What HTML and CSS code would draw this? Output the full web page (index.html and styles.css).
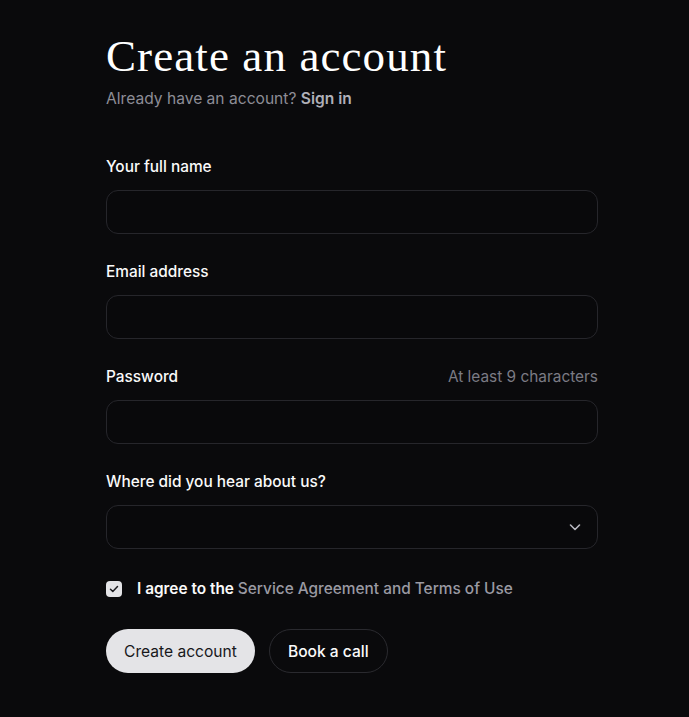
FILE: index.html
```html
<!DOCTYPE html>
<html lang="en">
<head>
    <meta charset="UTF-8">
    <meta name="viewport" content="width=device-width, initial-scale=1.0">
    <title>Create an account</title>
    <link rel="stylesheet" href="styles.css">
</head>
<body>
    <main class="signup">
        <h1 class="signup-title">Create an account</h1>
        <p class="signup-sub">Already have an account? <a href="#" class="signup-link">Sign in</a></p>

        <form class="signup-form">
            <div class="field">
                <label class="field-label" for="nameInput">Your full name</label>
                <input class="field-input" type="text" id="nameInput">
            </div>
            <div class="field">
                <label class="field-label" for="emailInput">Email address</label>
                <input class="field-input" type="email" id="emailInput">
            </div>
            <div class="field">
                <div class="field-head">
                    <label class="field-label" for="passwordInput">Password</label>
                    <span class="field-hint">At least 9 characters</span>
                </div>
                <input class="field-input" type="password" id="passwordInput">
            </div>
            <div class="field">
                <label class="field-label" for="sourceInput">Where did you hear about us?</label>
                <div class="select-wrap">
                    <select class="field-input field-select" id="sourceInput">
                        <option value=""></option>
                        <option value="search">Search engine</option>
                        <option value="friend">Friend or colleague</option>
                        <option value="social">Social media</option>
                        <option value="other">Other</option>
                    </select>
                    <svg class="select-chevron" width="14" height="14" viewBox="0 0 14 14" fill="none">
                        <path d="M2.5 5l4.5 4.5 4.5-4.5" stroke="#b8b8c0" stroke-width="1.6" stroke-linecap="round" stroke-linejoin="round"/>
                    </svg>
                </div>
            </div>

            <label class="agree">
                <span class="agree-box">
                    <svg width="12" height="12" viewBox="0 0 12 12" fill="none">
                        <path d="M2.5 6.2l2.3 2.3 4.7-5" stroke="#1c1c20" stroke-width="1.5" stroke-linecap="round" stroke-linejoin="round"/>
                    </svg>
                </span>
                <span class="agree-text">I agree to the <a href="#" class="agree-link">Service Agreement and Terms of Use</a></span>
            </label>

            <div class="actions">
                <button type="submit" class="btn btn-primary">Create account</button>
                <button type="button" class="btn btn-outline">Book a call</button>
            </div>
        </form>
    </main>
</body>
</html>
```

FILE: styles.css
```css
body {
    margin: 0;
    padding: 0;
    background-color: #0a0a0c;
    color: #fafafa;
    font-family: Inter, 'Noto Sans', sans-serif;
    font-size: 15.4px;
}
.signup {
    width: 492px;
    padding: 30px 0 40px 106px;
}
.signup-title {
    margin: 0;
    font-family: 'Liberation Serif', serif;
    font-weight: normal;
    font-size: 45px;
    line-height: 53px;
    letter-spacing: 1.1px;
    color: #fff;
}
.signup-sub {
    margin: 6px 0 0;
    line-height: 20px;
    font-size: 15.6px;
    color: #8d8d96;
}
.signup-link {
    color: #b0b0b8;
    font-weight: 600;
    text-decoration: none;
}
.signup-form {
    margin-top: 48px;
}
.field {
    margin-bottom: 28px;
}
.field-head {
    display: flex;
    justify-content: space-between;
    align-items: center;
}
.field-label {
    display: block;
    height: 20px;
    line-height: 20px;
    font-weight: 500;
    color: #fafafa;
}
.field-head,
.field > .field-label {
    margin-bottom: 13px;
}
.field-hint {
    color: #7b7b84;
    line-height: 20px;
}
.field-input {
    display: block;
    width: 100%;
    height: 44px;
    box-sizing: border-box;
    padding: 0 14px;
    background-color: #09090b;
    border: 1px solid #26262b;
    border-radius: 12px;
    color: #fafafa;
    font-family: inherit;
    font-size: 15px;
    outline: none;
}
.select-wrap {
    position: relative;
}
.field-select {
    appearance: none;
    -webkit-appearance: none;
}
.select-chevron {
    position: absolute;
    right: 16px;
    top: 15px;
    pointer-events: none;
}
.agree {
    display: flex;
    align-items: center;
    gap: 15px;
    margin-top: 30px;
    height: 20px;
    line-height: 20px;
    cursor: pointer;
}
.agree-box {
    width: 16px;
    height: 16px;
    border-radius: 4px;
    background-color: #e4e4e7;
    display: flex;
    align-items: center;
    justify-content: center;
}
.agree-text {
    font-weight: 600;
    color: #fafafa;
}
.agree-link {
    color: #9a9aa3;
    font-weight: 500;
    text-decoration: none;
}
.actions {
    display: flex;
    gap: 14px;
    margin-top: 30px;
}
.btn {
    height: 44px;
    padding: 0 18px;
    border-radius: 22px;
    font-family: inherit;
    font-size: 15.6px;
    cursor: pointer;
}
.btn-primary {
    background-color: #e4e4e7;
    color: #18181b;
    border: none;
}
.btn-outline {
    background-color: transparent;
    color: #fafafa;
    border: 1px solid #2a2a2f;
    font-weight: 500;
}
```
